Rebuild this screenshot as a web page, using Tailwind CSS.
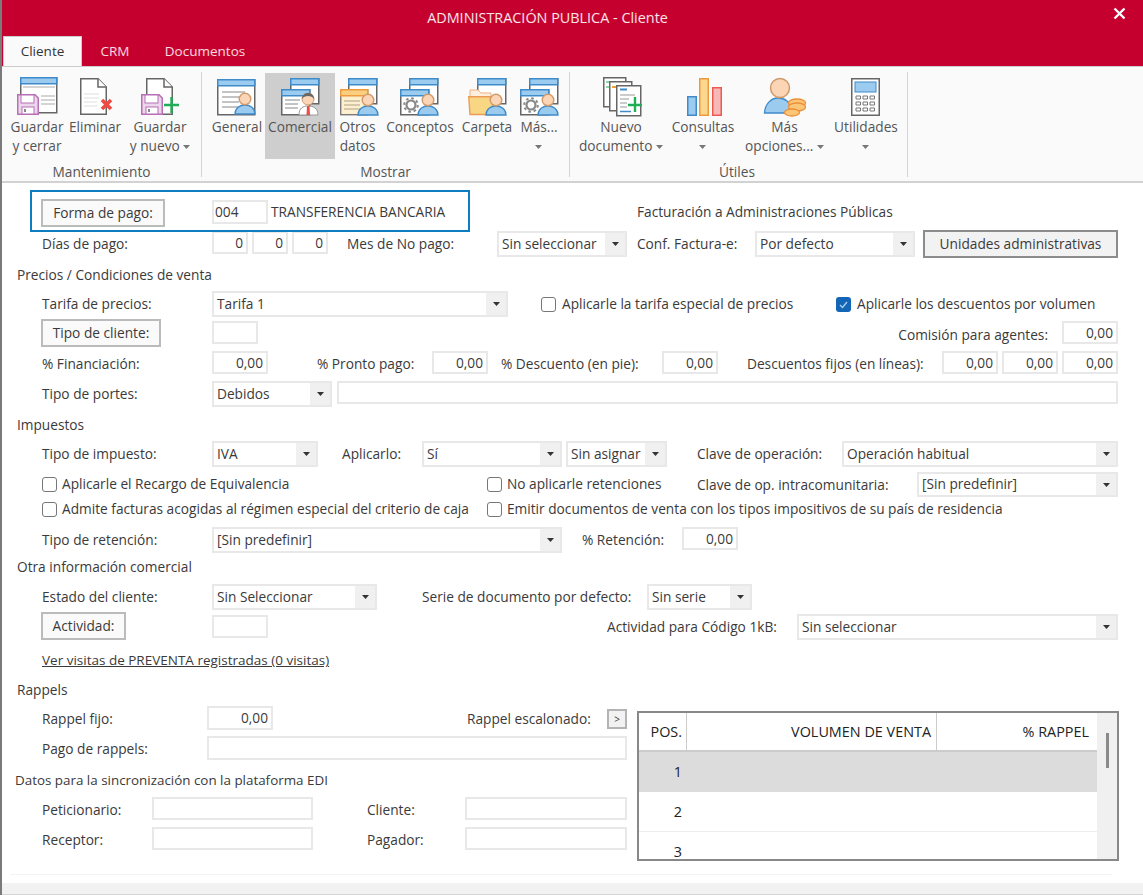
<!DOCTYPE html>
<html lang="es">
<head>
<meta charset="UTF-8">
<title>ADMINISTRACIÓN PUBLICA - Cliente</title>
<script src="https://cdn.jsdelivr.net/npm/@tailwindcss/browser@4"></script>
</head>
<body class="w-[1143px] h-[895px] overflow-hidden bg-white whitespace-nowrap text-[#3a3a3a] font-['Open_Sans',sans-serif] text-[13.7px]">

<!-- piezas de iconos -->
<svg width="0" height="0" class="absolute">
  <defs>
    <g id="win"><rect x=".75" y=".75" width="28" height="25" fill="#fff" stroke="#666" stroke-width="1.5"/><rect x=".75" y=".75" width="28" height="6" fill="#9ccbf0" stroke="#3f8bc9" stroke-width="1.5"/></g>
    <g id="person"><path d="M-10 15C-10 9-5 6 0 6S10 9 10 15Z" fill="#9ccbf0" stroke="#3f8bc9" stroke-width="1.3"/><circle r="5.8" fill="#fbd5b5" stroke="#cf9a6c" stroke-width="1.4"/></g>
    <g id="floppy"><path d="M.75.75H18L21.25 4V20.25H.75Z" fill="#ecd6ec" stroke="#b76fb5" stroke-width="1.5"/><rect x="4" y="1" width="13" height="8" fill="#fff" stroke="#b76fb5"/><rect x="5" y="13" width="12" height="7" fill="#fff" stroke="#b76fb5"/><rect x="7" y="15" width="2" height="3" fill="#888"/></g>
    <g id="doc"><path d="M.75.75H18L26.25 9V36.25H.75Z" fill="#fff" stroke="#666" stroke-width="1.5"/><path d="M18 .75V9H26.25" fill="#fff" stroke="#666" stroke-width="1.5"/></g>
    <g id="gear"><circle r="4.500" fill="none" stroke="#888" stroke-width="2.200"/><circle r="6.800" fill="none" stroke="#888" stroke-width="2" stroke-dasharray="2.600 2.740"/></g>
    <g id="arrow"><path d="M0 0H7L3.500 4Z" fill="#777"/></g>
    <g id="drop"><path d="M0 0H7L3.500 4Z" fill="#333"/></g>
  </defs>
</svg>

<div class="relative h-[895px] flex flex-col border-l-2 border-[#7a7a7a]">

  <!-- titulo + pestañas -->
  <div class="h-[66px] bg-[#c5002e] shrink-0 flex flex-col">
    <div class="h-[35px] flex items-center justify-center text-white/90 text-[14.4px] pr-[50px]">ADMINISTRACIÓN PUBLICA - Cliente</div>
    <div class="flex mt-auto h-[30px] pl-[1px] text-[13.5px]">
      <div class="w-[79px] bg-[#fafafa] border border-b-0 border-[#ccc] text-[#333] flex items-center justify-center">Cliente</div>
      <div class="w-[66px] text-white/85 flex items-center justify-center">CRM</div>
      <div class="w-[114px] text-white/85 flex items-center justify-center">Documentos</div>
    </div>
  </div>
  <button class="absolute right-[17px] top-[7px]">
    <svg class="block" width="13" height="13" viewBox="0 0 13 13"><path d="M1.5 1.5l10 10M11.5 1.5l-10 10" stroke="#fff" stroke-width="2.4"/></svg>
  </button>

  <!-- ribbon -->
  <div class="h-[117px] shrink-0 bg-[#fafafa] border-t border-[#ccc] border-b-2 border-b-[#d2d2d2] flex text-[13.7px] text-[#555]">

    <!-- Mantenimiento -->
    <div class="w-[199px] flex flex-col">
      <div class="flex pl-[6px] pt-[6px] h-[96px]">
        <div class="w-[58px] h-[86px] flex flex-col items-center text-center leading-[19px]">
          <svg class="mt-[1px] -mb-[1px] shrink-0" width="44" height="44" viewBox="0 0 44 44">
            <rect x="5.75" y="3.75" width="36" height="35" fill="#fff" stroke="#666" stroke-width="1.5"/><rect x="5.75" y="3.75" width="36" height="6" fill="#9ccbf0" stroke="#3f8bc9" stroke-width="1.5"/>
            <path d="M8 13H40M26 22H40M26 26H40M26 30H40" stroke="#aaa"/><use href="#floppy" x="2" y="20"/>
          </svg>
          <span>Guardar<br>y cerrar</span>
        </div>
        <div class="w-[58px] h-[86px] flex flex-col items-center text-center leading-[19px]">
          <svg class="mt-[1px] -mb-[1px] shrink-0" width="44" height="44" viewBox="0 0 44 44">
            <use href="#doc" x="7" y="4"/><path d="M11 20H26M11 24H26M11 28H24M11 32H24" stroke="#ddd"/>
            <path d="M29 26L38 35M38 26L29 35" stroke="#ef4a43" stroke-width="3.6"/>
          </svg>
          <span>Eliminar</span>
        </div>
        <div class="ml-[6px] w-[60px] h-[86px] flex flex-col items-center text-center leading-[19px]">
          <svg class="mt-[1px] -mb-[1px] shrink-0" width="44" height="44" viewBox="0 0 44 44">
            <use href="#doc" x="8" y="4"/><use href="#floppy" x="3" y="20"/>
            <path d="M33.5 23V39M26 31H41" stroke="#1fae55" stroke-width="2.4"/>
          </svg>
          <span>Guardar<br>y nuevo <svg class="inline" width="7" height="4"><use href="#arrow"/></svg></span>
        </div>
      </div>
      <div class="text-center leading-[18px]">Mantenimiento</div>
    </div>
    <div class="w-[1px] h-[105px] mt-[5px] bg-[#d4d4d4]"></div>

    <!-- Mostrar -->
    <div class="w-[367px] flex flex-col">
      <div class="flex pl-[7px] pt-[6px] h-[96px]">
        <div class="w-[56px] h-[86px] flex flex-col items-center text-center leading-[19px]">
          <svg class="mt-[1px] -mb-[1px] shrink-0" width="44" height="44" viewBox="0 0 44 44">
            <rect x="2.75" y="5.75" width="37" height="35" fill="#fff" stroke="#666" stroke-width="1.5"/><rect x="2.75" y="5.75" width="37" height="6" fill="#9ccbf0" stroke="#3f8bc9" stroke-width="1.5"/>
            <path d="M7 18H30M7 23H24M7 28H24M7 33H24" stroke="#888"/><use href="#person" x="30" y="25"/>
          </svg>
          <span>General</span>
        </div>
        <div class="w-[70px] h-[86px] bg-[#cecece] flex flex-col items-center text-center leading-[19px]">
          <svg class="mt-[1px] -mb-[1px] shrink-0" width="44" height="44" viewBox="0 0 44 44">
            <use href="#win" x="12" y="4"/><use href="#win" x="3" y="15"/>
            <path d="M7 26H22M7 30H20M7 34H20" stroke="#888"/>
            <path d="M21 41C21 34 25 32 30 32S40 34 40 41Z" fill="#fff" stroke="#999"/><path d="M29 32H31.5L32 41H28.5Z" fill="#ef4a43"/>
            <circle cx="30" cy="25" r="6" fill="#fbd5b5" stroke="#cf9a6c"/><path d="M24 25C24 17 36 17 36 25C34 21 26 21 24 25Z" fill="#666"/>
          </svg>
          <span>Comercial</span>
        </div>
        <div class="w-[45px] h-[86px] flex flex-col items-center text-center leading-[19px]">
          <svg class="mt-[1px] -mb-[1px] shrink-0" width="44" height="44" viewBox="0 0 44 44">
            <use href="#win" x="12" y="4"/>
            <rect x="4.75" y="15.75" width="27" height="25" fill="#fdf0d0" stroke="#666" stroke-width="1.2"/><rect x="4.75" y="15.75" width="27" height="6" fill="#fbcf80" stroke="#ef9a3c" stroke-width="1.5"/>
            <path d="M8 27H24M8 31H24M8 35H24" stroke="#b0a080"/><use href="#person" x="32" y="26"/>
          </svg>
          <span>Otros<br>datos</span>
        </div>
        <div class="w-[80px] h-[86px] flex flex-col items-center text-center leading-[19px]">
          <svg class="mt-[1px] -mb-[1px] shrink-0" width="44" height="44" viewBox="0 0 44 44">
            <use href="#win" x="11" y="4"/><use href="#win" x="2" y="15"/><use href="#gear" x="13" y="31"/><use href="#person" x="30" y="26"/>
          </svg>
          <span>Conceptos</span>
        </div>
        <div class="w-[54px] h-[86px] flex flex-col items-center text-center leading-[19px]">
          <svg class="mt-[1px] -mb-[1px] shrink-0" width="44" height="44" viewBox="0 0 44 44">
            <use href="#win" x="12" y="4"/>
            <path d="M5 21V16H13L16 19H26V24H5Z" fill="#fdeedd" stroke="#f0b080"/><path d="M3.75 22.75H28V40.5H5Z" fill="#f9d684" stroke="#ec9b55" stroke-width="1.4"/><use href="#person" x="31" y="26"/>
          </svg>
          <span>Carpeta</span>
        </div>
        <div class="w-[50px] h-[86px] flex flex-col items-center text-center leading-[19px]">
          <svg class="mt-[1px] -mb-[1px] shrink-0" width="44" height="44" viewBox="0 0 44 44">
            <use href="#win" x="12" y="4"/><use href="#win" x="3" y="15"/><use href="#gear" x="14" y="31"/><use href="#person" x="31" y="26"/>
          </svg>
          <span>Más...<br><svg class="inline" width="7" height="4"><use href="#arrow"/></svg></span>
        </div>
      </div>
      <div class="text-center leading-[18px]">Mostrar</div>
    </div>
    <div class="w-[1px] h-[105px] mt-[5px] bg-[#d4d4d4]"></div>

    <!-- Utiles -->
    <div class="w-[338px] flex flex-col">
      <div class="flex pl-[4px] pt-[6px] h-[96px]">
        <div class="w-[94px] h-[86px] flex flex-col items-center text-center leading-[19px]">
          <svg class="mt-[1px] -mb-[1px] shrink-0" width="44" height="44" viewBox="0 0 44 44">
            <rect x="4.75" y="3.75" width="22" height="29" fill="#fff" stroke="#666" stroke-width="1.5"/><path d="M7 8H12M7 13H20" stroke="#1fae55"/>
            <rect x="10.75" y="7.75" width="22" height="29" fill="#fff" stroke="#666" stroke-width="1.5"/><path d="M13 13H17" stroke="#f0a030" stroke-width="2"/>
            <rect x="17.75" y="11.75" width="24" height="30" fill="#fff" stroke="#666" stroke-width="1.5"/>
            <path d="M21 15.5H28" stroke="#3f8bc9" stroke-width="2"/><path d="M21 21H36M21 25H30M21 29H28M21 33H28" stroke="#999"/><path d="M21 37.5H32" stroke="#3f8bc9" stroke-width="1.5"/>
            <path d="M36 23V38M29 31H43" stroke="#1fae55" stroke-width="2.4"/>
          </svg>
          <span>Nuevo<br>documento <svg class="inline" width="7" height="4"><use href="#arrow"/></svg></span>
        </div>
        <div class="w-[70px] h-[86px] flex flex-col items-center text-center leading-[19px]">
          <svg class="mt-[1px] -mb-[1px] shrink-0" width="44" height="44" viewBox="0 0 44 44">
            <rect x="6.75" y="22.75" width="8.5" height="18.5" fill="#9ccbf0" stroke="#3f8bc9" stroke-width="1.5"/>
            <rect x="18.75" y="4.75" width="8.5" height="36.5" fill="#fbd78f" stroke="#ef9a3c" stroke-width="1.5"/>
            <rect x="31.75" y="13.75" width="8.5" height="27.5" fill="#f7b8b8" stroke="#ef5a50" stroke-width="1.5"/>
          </svg>
          <span>Consultas<br><svg class="inline" width="7" height="4"><use href="#arrow"/></svg></span>
        </div>
        <div class="w-[93px] h-[86px] flex flex-col items-center text-center leading-[19px]">
          <svg class="mt-[1px] -mb-[1px] shrink-0" width="44" height="44" viewBox="0 0 44 44">
            <path d="M1.5 39C2 30 8 24 15 24S27 28 28 34V39Z" fill="#9ccbf0" stroke="#3f8bc9" stroke-width="1.3"/>
            <circle cx="17" cy="14" r="9.5" fill="#fbd5b5" stroke="#cf9a6c" stroke-width="1.5"/>
            <ellipse cx="34" cy="29" rx="8.5" ry="4" fill="#fbc777" stroke="#ec8f3c" stroke-width="1.3"/>
            <ellipse cx="34" cy="33" rx="8.5" ry="4" fill="#fbc777" stroke="#ec8f3c" stroke-width="1.3"/>
            <ellipse cx="29" cy="38.5" rx="7.5" ry="3.5" fill="#fbc777" stroke="#ec8f3c" stroke-width="1.3"/>
          </svg>
          <span>Más<br>opciones... <svg class="inline" width="7" height="4"><use href="#arrow"/></svg></span>
        </div>
        <div class="w-[70px] h-[86px] flex flex-col items-center text-center leading-[19px]">
          <svg class="mt-[1px] -mb-[1px] shrink-0" width="44" height="44" viewBox="0 0 44 44">
            <rect x="7.75" y="4.75" width="27.5" height="36.5" fill="#fff" stroke="#666" stroke-width="1.5"/>
            <rect x="11" y="8" width="21" height="10" fill="#9ccbf0" stroke="#3f8bc9"/>
            <path d="M12 22h4.500v3H12zM19 22h4.500v3H19zM26 22h4.500v3H26zM12 28h4.500v3H12zM19 28h4.500v3H19zM26 28h4.500v3H26zM12 34h4.500v3H12zM19 34h4.500v3H19zM26 34h4.500v3H26z" fill="#fff" stroke="#777"/>
          </svg>
          <span>Utilidades<br><svg class="inline" width="7" height="4"><use href="#arrow"/></svg></span>
        </div>
      </div>
      <div class="text-center leading-[18px] w-[334px]">Útiles</div>
    </div>
    <div class="w-[1px] h-[105px] mt-[5px] -ml-[1px] bg-[#d4d4d4]"></div>
  </div>

  <!-- formulario -->
  <div class="relative flex-1 flex flex-col pt-[16px]">
    <div class="absolute left-[28px] top-[7px] w-[440px] h-[42px] border-2 border-[#0c7dc0]"></div>

    <div class="h-[32px] flex items-start pl-[40px]">
      <button class="-ml-[1px] w-[124px] h-[28px] border-2 border-[#bbb] bg-[#fafafa]">Forma de pago:</button>
      <div class="ml-[47px] mt-[1px] w-[56px] h-[24px] border-2 border-[#e8e8e8] px-[1px] leading-[20px]">004</div>
      <div class="ml-[3px] mt-[1px] w-[366px] leading-[24px]">TRANSFERENCIA BANCARIA</div>
      <div class="mt-[1px] leading-[24px]">Facturación a Administraciones Públicas</div>
    </div>

    <div class="h-[33px] flex items-start pl-[40px]">
      <div class="w-[170px] leading-[26px]">Días de pago:</div>
      <div class="w-[36px] h-[23px] border-2 border-[#e8e8e8] px-[3px] text-right leading-[19px]">0</div>
      <div class="ml-[4px] w-[36px] h-[23px] border-2 border-[#e8e8e8] px-[3px] text-right leading-[19px]">0</div>
      <div class="ml-[4px] w-[36px] h-[23px] border-2 border-[#e8e8e8] px-[3px] text-right leading-[19px]">0</div>
      <div class="ml-[19px] w-[150px] leading-[26px]">Mes de No pago:</div>
      <div class="w-[130px] h-[26px] border-2 border-[#e8e8e8] flex items-center pl-[3px]"><span class="flex-1">Sin seleccionar</span><span class="w-[20px] h-full bg-[#f0f0f0] flex items-center justify-center"><svg width="7" height="4"><use href="#drop"/></svg></span></div>
      <div class="ml-[10px] w-[118px] leading-[26px]">Conf. Factura-e:</div>
      <div class="w-[160px] h-[26px] border-2 border-[#e8e8e8] flex items-center pl-[3px]"><span class="flex-1">Por defecto</span><span class="w-[20px] h-full bg-[#f0f0f0] flex items-center justify-center"><svg width="7" height="4"><use href="#drop"/></svg></span></div>
      <button class="ml-[8px] -mt-[1px] w-[195px] h-[28px] border-2 border-[#8c8c8c] bg-[#f2f2f2]">Unidades administrativas</button>
    </div>

    <div class="h-[27px] pl-[15px] leading-[22px]">Precios / Condiciones de venta</div>

    <div class="h-[28px] flex items-start pl-[40px]">
      <div class="w-[170px] leading-[26px]">Tarifa de precios:</div>
      <div class="w-[296px] h-[26px] border-2 border-[#e8e8e8] flex items-center pl-[3px]"><span class="flex-1">Tarifa 1</span><span class="w-[20px] h-full bg-[#f0f0f0] flex items-center justify-center"><svg width="7" height="4"><use href="#drop"/></svg></span></div>
      <label class="ml-[33px] w-[295px] h-[26px] flex items-center"><span class="w-[15px] h-[15px] rounded-[3px] border border-[#777] bg-white"></span><span class="ml-[6px]">Aplicarle la tarifa especial de precios</span></label>
      <label class="h-[26px] flex items-center"><span class="w-[15px] h-[15px] rounded-[3px] bg-[#1366b5] flex items-center justify-center"><svg width="11" height="11" viewBox="0 0 11 11"><path d="M2 6l2.500 2.500L9 3" fill="none" stroke="#a9cdf0" stroke-width="1.400"/></svg></span><span class="ml-[6px]">Aplicarle los descuentos por volumen</span></label>
    </div>

    <div class="h-[32px] flex items-start pl-[40px]">
      <button class="-ml-[1px] w-[120px] h-[28px] border-2 border-[#bbb] bg-[#fafafa]">Tipo de cliente:</button>
      <div class="ml-[51px] mt-[2px] w-[46px] h-[23px] border-2 border-[#e8e8e8]"></div>
      <div class="mt-[3px] w-[790px] text-right leading-[26px]">Comisión para agentes:</div>
      <div class="ml-[14px] mt-[2px] w-[56px] h-[23px] border-2 border-[#e8e8e8] px-[3px] text-right leading-[19px]">0,00</div>
    </div>

    <div class="h-[30px] flex items-start pl-[40px]">
      <div class="w-[170px] leading-[26px]">% Financiación:</div>
      <div class="w-[56px] h-[23px] border-2 border-[#e8e8e8] px-[3px] text-right leading-[19px]">0,00</div>
      <div class="ml-[49px] w-[115px] leading-[26px]">% Pronto pago:</div>
      <div class="w-[56px] h-[23px] border-2 border-[#e8e8e8] px-[3px] text-right leading-[19px]">0,00</div>
      <div class="ml-[13px] w-[161px] leading-[26px]">% Descuento (en pie):</div>
      <div class="w-[56px] h-[23px] border-2 border-[#e8e8e8] px-[3px] text-right leading-[19px]">0,00</div>
      <div class="ml-[29px] w-[195px] leading-[26px]">Descuentos fijos (en líneas):</div>
      <div class="w-[56px] h-[23px] border-2 border-[#e8e8e8] px-[3px] text-right leading-[19px]">0,00</div>
      <div class="ml-[4px] w-[56px] h-[23px] border-2 border-[#e8e8e8] px-[3px] text-right leading-[19px]">0,00</div>
      <div class="ml-[4px] w-[56px] h-[23px] border-2 border-[#e8e8e8] px-[3px] text-right leading-[19px]">0,00</div>
    </div>

    <div class="h-[33px] flex items-start pl-[40px]">
      <div class="w-[170px] leading-[26px]">Tipo de portes:</div>
      <div class="w-[120px] h-[26px] border-2 border-[#e8e8e8] flex items-center pl-[3px]"><span class="flex-1">Debidos</span><span class="w-[20px] h-full bg-[#f0f0f0] flex items-center justify-center"><svg width="7" height="4"><use href="#drop"/></svg></span></div>
      <div class="ml-[5px] w-[781px] h-[23px] border-2 border-[#e8e8e8]"></div>
    </div>

    <div class="h-[27px] pl-[15px] leading-[22px]">Impuestos</div>

    <div class="h-[31px] flex items-start pl-[40px]">
      <div class="w-[170px] leading-[26px]">Tipo de impuesto:</div>
      <div class="w-[106px] h-[26px] border-2 border-[#e8e8e8] flex items-center pl-[3px]"><span class="flex-1">IVA</span><span class="w-[20px] h-full bg-[#f0f0f0] flex items-center justify-center"><svg width="7" height="4"><use href="#drop"/></svg></span></div>
      <div class="ml-[24px] w-[80px] leading-[26px]">Aplicarlo:</div>
      <div class="w-[140px] h-[26px] border-2 border-[#e8e8e8] flex items-center pl-[3px]"><span class="flex-1">Sí</span><span class="w-[20px] h-full bg-[#f0f0f0] flex items-center justify-center"><svg width="7" height="4"><use href="#drop"/></svg></span></div>
      <div class="ml-[4px] w-[101px] h-[26px] border-2 border-[#e8e8e8] flex items-center pl-[3px]"><span class="flex-1">Sin asignar</span><span class="w-[20px] h-full bg-[#f0f0f0] flex items-center justify-center"><svg width="7" height="4"><use href="#drop"/></svg></span></div>
      <div class="ml-[30px] w-[145px] leading-[26px]">Clave de operación:</div>
      <div class="w-[276px] h-[26px] border-2 border-[#e8e8e8] flex items-center pl-[3px]"><span class="flex-1">Operación habitual</span><span class="w-[20px] h-full bg-[#f0f0f0] flex items-center justify-center"><svg width="7" height="4"><use href="#drop"/></svg></span></div>
    </div>

    <div class="h-[25px] flex items-start pl-[40px]">
      <label class="w-[445px] h-[25px] flex items-center"><span class="w-[15px] h-[15px] rounded-[3px] border border-[#777] bg-white"></span><span class="ml-[5px]">Aplicarle el Recargo de Equivalencia</span></label>
      <label class="w-[210px] h-[25px] flex items-center"><span class="w-[15px] h-[15px] rounded-[3px] border border-[#777] bg-white"></span><span class="ml-[5px]">No aplicarle retenciones</span></label>
      <div class="w-[220px] leading-[25px]">Clave de op. intracomunitaria:</div>
      <div class="w-[201px] h-[25px] border-2 border-[#e8e8e8] flex items-center pl-[3px]"><span class="flex-1">[Sin predefinir]</span><span class="w-[20px] h-full bg-[#f0f0f0] flex items-center justify-center"><svg width="7" height="4"><use href="#drop"/></svg></span></div>
    </div>

    <div class="h-[30px] flex items-start pl-[40px]">
      <label class="w-[445px] h-[24px] flex items-center"><span class="w-[15px] h-[15px] rounded-[3px] border border-[#777] bg-white"></span><span class="ml-[5px]">Admite facturas acogidas al régimen especial del criterio de caja</span></label>
      <label class="h-[24px] flex items-center"><span class="w-[15px] h-[15px] rounded-[3px] border border-[#777] bg-white"></span><span class="ml-[5px]">Emitir documentos de venta con los tipos impositivos de su país de residencia</span></label>
    </div>

    <div class="h-[29px] flex items-start pl-[40px]">
      <div class="w-[170px] leading-[26px]">Tipo de retención:</div>
      <div class="w-[350px] h-[26px] border-2 border-[#e8e8e8] flex items-center pl-[3px]"><span class="flex-1">[Sin predefinir]</span><span class="w-[20px] h-full bg-[#f0f0f0] flex items-center justify-center"><svg width="7" height="4"><use href="#drop"/></svg></span></div>
      <div class="ml-[20px] w-[100px] leading-[26px]">% Retención:</div>
      <div class="w-[56px] h-[23px] border-2 border-[#e8e8e8] px-[3px] text-right leading-[19px]">0,00</div>
    </div>

    <div class="h-[28px] pl-[15px] leading-[22px]">Otra información comercial</div>

    <div class="h-[28px] flex items-start pl-[40px]">
      <div class="w-[170px] leading-[26px]">Estado del cliente:</div>
      <div class="w-[165px] h-[26px] border-2 border-[#e8e8e8] flex items-center pl-[3px]"><span class="flex-1">Sin Seleccionar</span><span class="w-[20px] h-full bg-[#f0f0f0] flex items-center justify-center"><svg width="7" height="4"><use href="#drop"/></svg></span></div>
      <div class="ml-[45px] w-[225px] leading-[26px]">Serie de documento por defecto:</div>
      <div class="w-[105px] h-[26px] border-2 border-[#e8e8e8] flex items-center pl-[3px]"><span class="flex-1">Sin serie</span><span class="w-[20px] h-full bg-[#f0f0f0] flex items-center justify-center"><svg width="7" height="4"><use href="#drop"/></svg></span></div>
    </div>

    <div class="h-[37px] flex items-start pl-[40px]">
      <button class="-ml-[1px] w-[85px] h-[28px] border-2 border-[#bbb] bg-[#fafafa]">Actividad:</button>
      <div class="ml-[86px] mt-[3px] w-[56px] h-[23px] border-2 border-[#e8e8e8]"></div>
      <div class="ml-[339px] mt-[2px] w-[190px] leading-[26px]">Actividad para Código 1kB:</div>
      <div class="mt-[2px] w-[321px] h-[26px] border-2 border-[#e8e8e8] flex items-center pl-[3px]"><span class="flex-1">Sin seleccionar</span><span class="w-[20px] h-full bg-[#f0f0f0] flex items-center justify-center"><svg width="7" height="4"><use href="#drop"/></svg></span></div>
    </div>

    <div class="h-[30px] pl-[40px] leading-[22px] text-[13.5px]"><a class="underline">Ver visitas de PREVENTA registradas (0 visitas)</a></div>

    <div class="h-[27px] pl-[15px] leading-[22px]">Rappels</div>

    <div class="flex h-[155px]">
      <div class="w-[625px]">
        <div class="h-[30px] flex items-start pl-[40px]">
          <div class="w-[165px] leading-[26px]">Rappel fijo:</div>
          <div class="w-[66px] h-[24px] border-2 border-[#e8e8e8] px-[3px] text-right leading-[20px]">0,00</div>
          <div class="ml-[194px] w-[140px] leading-[26px]">Rappel escalonado:</div>
          <button class="mt-[3px] w-[20px] h-[20px] border-2 border-[#b4b4b4] bg-[#f2f2f2] text-[10px] leading-[14px]">&gt;</button>
        </div>
        <div class="h-[33px] flex items-start pl-[40px]">
          <div class="w-[165px] leading-[26px]">Pago de rappels:</div>
          <div class="w-[420px] h-[24px] border-2 border-[#e8e8e8]"></div>
        </div>
        <div class="h-[28px] pl-[13px] leading-[22px] text-[13.4px]">Datos para la sincronización con la plataforma EDI</div>
        <div class="h-[30px] flex items-start pl-[40px]">
          <div class="w-[110px] leading-[26px]">Peticionario:</div>
          <div class="w-[161px] h-[23px] border-2 border-[#e8e8e8]"></div>
          <div class="ml-[54px] w-[98px] leading-[26px]">Cliente:</div>
          <div class="w-[162px] h-[23px] border-2 border-[#e8e8e8]"></div>
        </div>
        <div class="h-[30px] flex items-start pl-[40px]">
          <div class="w-[110px] leading-[26px]">Receptor:</div>
          <div class="w-[161px] h-[23px] border-2 border-[#e8e8e8]"></div>
          <div class="ml-[54px] w-[98px] leading-[26px]">Pagador:</div>
          <div class="w-[162px] h-[23px] border-2 border-[#e8e8e8]"></div>
        </div>
      </div>

      <!-- tabla de rappels -->
      <div class="ml-[10px] mt-[5px] w-[482px] h-[150px] border-2 border-[#888] flex overflow-hidden text-[14.4px] text-[#222]">
        <div class="w-[458px]">
          <div class="flex h-[39px] border-b-2 border-[#ccc] leading-[37px]">
            <div class="w-[48px] border-r border-[#ccc] text-right pr-[4px]">POS.</div>
            <div class="w-[250px] border-r border-[#ccc] text-right pr-[5px]">VOLUMEN DE VENTA</div>
            <div class="w-[160px] text-right pr-[8px]">% RAPPEL</div>
          </div>
          <div class="h-[40px] bg-[#dcdcdc] leading-[40px] text-right pr-[415px]">1</div>
          <div class="h-[40px] border-b border-[#eee] leading-[40px] text-right pr-[415px]">2</div>
          <div class="h-[40px] leading-[40px] text-right pr-[415px]">3</div>
        </div>
        <div class="flex-1 bg-[#f0f0f0] pt-[20px] pl-[9px]">
          <div class="w-[3px] h-[35px] bg-[#8a8a8a]"></div>
        </div>
      </div>
    </div>

    <div class="mt-[13px] ml-[8px] w-[1102px] h-[1px] bg-[#f4f4f4]"></div>
    <div class="mt-auto h-[12px] bg-[#f2f2f2] border-b border-[#d4d4d4]"></div>
  </div>
</div>
</body>
</html>
